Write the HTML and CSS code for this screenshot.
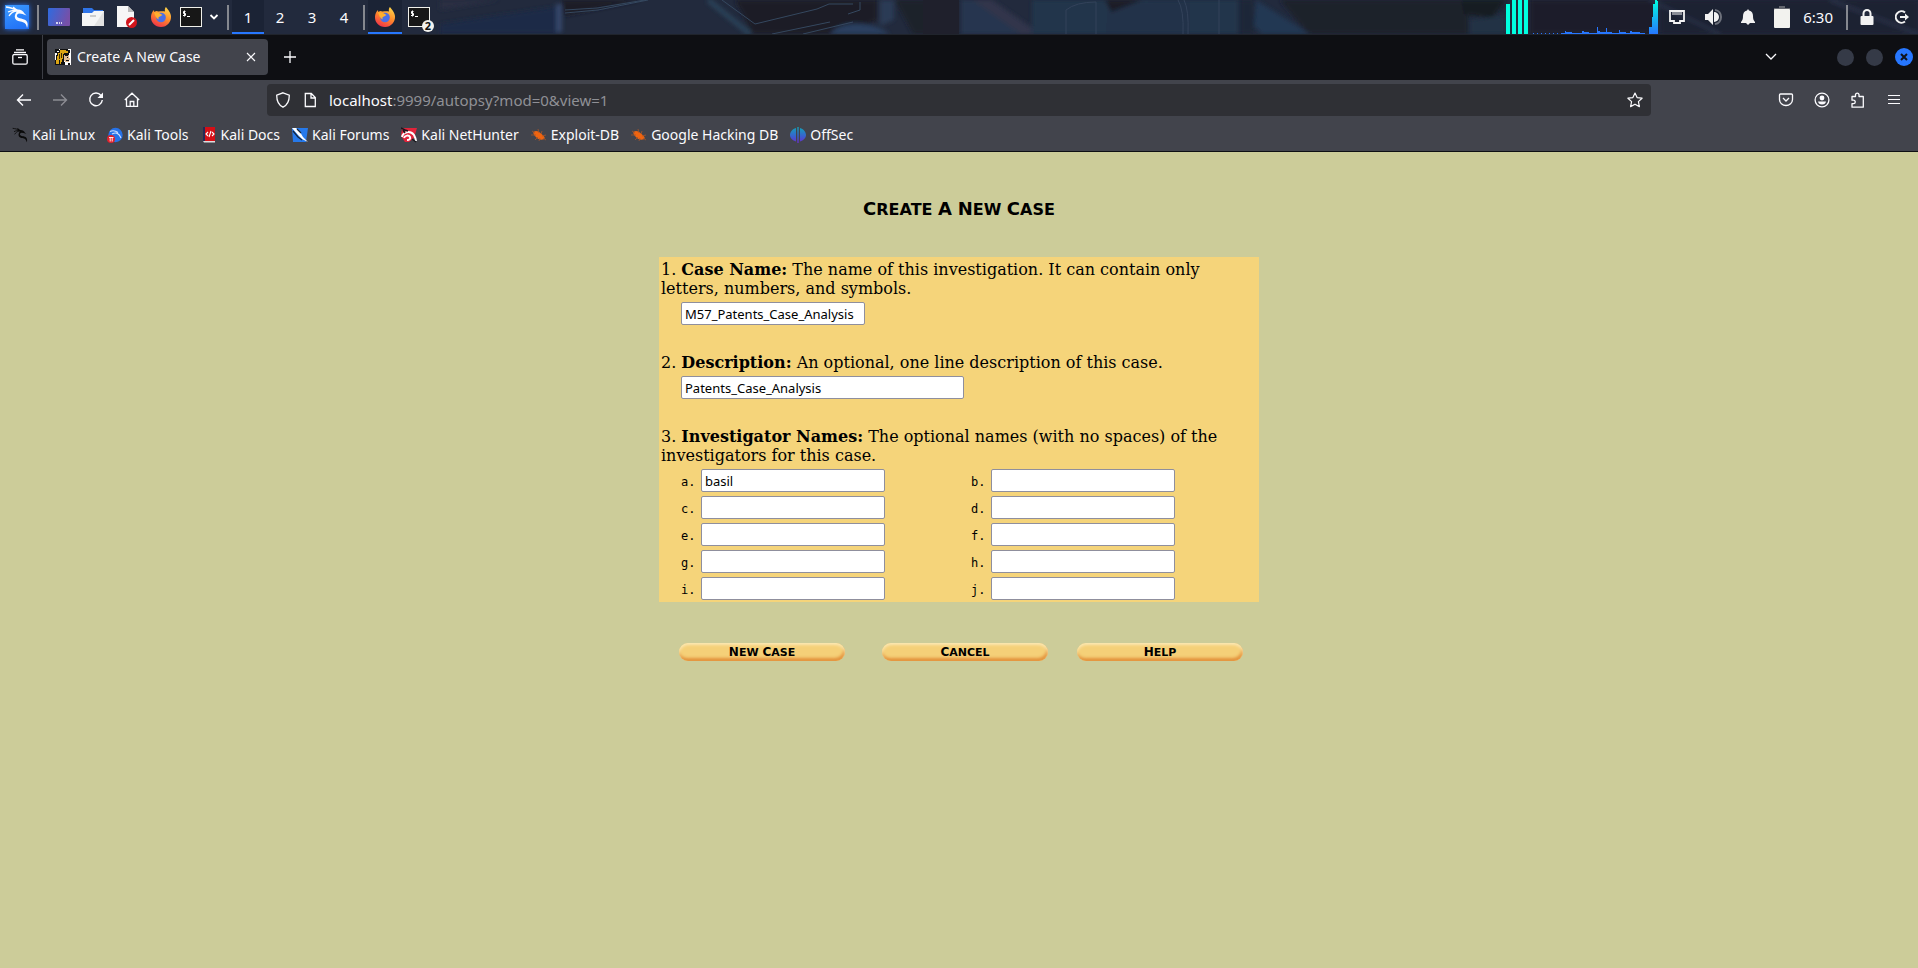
FILE: index.html
```html
<!DOCTYPE html>
<html lang="en">
<head>
<meta charset="utf-8">
<title>Create A New Case</title>
<link rel="stylesheet" href="styles.css">
</head>
<body>
<svg class="defs" aria-hidden="true">
  <defs>
    <linearGradient id="desk" x1="0" y1="0" x2="1" y2="0.3"><stop offset="0" stop-color="#2e6be0"/><stop offset="1" stop-color="#7650a8"/></linearGradient>
    <linearGradient id="fire" x1="0.8" y1="0" x2="0.3" y2="1"><stop offset="0" stop-color="#ffd84a"/><stop offset="0.5" stop-color="#ff8a2b"/><stop offset="1" stop-color="#f0324a"/></linearGradient>
    <linearGradient id="off" x1="0" y1="0" x2="0" y2="1"><stop offset="0" stop-color="#12a3b8"/><stop offset="0.6" stop-color="#3a5fd0"/><stop offset="1" stop-color="#6a2cc8"/></linearGradient>
    <linearGradient id="cpu" x1="0" y1="0" x2="0" y2="1"><stop offset="0" stop-color="#00ffe0"/><stop offset="1" stop-color="#2777ff"/></linearGradient>
    <filter id="soft"><feGaussianBlur stdDeviation="2"/></filter>
    <symbol id="dragon" viewBox="0 0 24 24">
      <path d="M1 2c4 .5 7 1 9.500 3M3 7c3-1.500 5-2 8-1.500M4 11c1.500-2.500 4-4.500 7-5" fill="none" stroke="currentColor" stroke-width="1.300"/>
      <path d="M8 1.500c2 1 3 2.500 5 3 3 0 5 1.500 6.500 4l2 2-4-1.500-3-.5c-2 0-3 1.500-2.500 3 1 2.500 7 1.500 9.500 4.500 1.500 2 1.500 4.500.5 7-.5-3-1.500-5-4-5.800-3-1-7-.8-8-4.200-.7-2.500.5-4.500 1.500-6L8 3z" fill="currentColor"/>
    </symbol>
    <symbol id="firefox" viewBox="0 0 22 22">
      <path d="M16 1c1 1.500 4.500 5 5 9 .5 6-4 11-10 11S.8 16.500 1 11c0-3 1-5 3-7 0 1 .2 1.500.5 2C6 4.500 7 5 8.500 5.500 11 5 13.500 5 15 5.500 14.500 3.500 15 2 16 1z" fill="url(#fire)"/>
      <circle cx="11" cy="11.500" r="4.800" fill="#4a6fe8"/>
      <path d="M4 6c2 1 4 0 6 1.500L12.500 9 10 10.500c-2 .3-2 1.800-1 3-3-1-4-4-5-7.500z" fill="#ffb02e"/>
    </symbol>
    <symbol id="term" viewBox="0 0 22 20">
      <rect x="0.500" y="0.500" width="21" height="19" fill="#171717" stroke="#f0f0ea"/>
      <path d="M5.500 4.500h-2V6.500h2V8.500h-2.500M4.500 3.500v6M7 9.500h3" fill="none" stroke="#fff"/>
    </symbol>
    <symbol id="bug" viewBox="0 0 16 16">
      <path d="M2.500 5c2-2 5-1 7 1s5 4 4 5.500c-1 1.500-4 1.500-6 .5S1.500 7 2.500 5z" fill="#f0640f"/>
      <path d="M1 4l3 2M0 8l5 0M4 13l3-3M8 14l1-3M7 2l1 4M11 4l-1 3M15 8l-4 1M15 13l-3-2" stroke="#a5562c" stroke-width=".8"/>
    </symbol>
  </defs>
</svg>

<header class="panel">
  <svg class="wallpaper" viewBox="0 0 1918 34" preserveAspectRatio="none" aria-hidden="true">
    <rect width="1918" height="34" fill="#222a3d"/>
    <g filter="url(#soft)">
      <path d="M440 24L560 6v28H440z" fill="#1d2a47"/>
      <path d="M440 10L500 0h-60z" fill="#2a2f43"/>
      <path d="M561 0h80l-78 16z" fill="#1b1d27"/>
      <path d="M556 4h6v28h-6z" fill="#34476a"/>
      <path d="M735 0h142v20l-30 14h-94z" fill="#1b1c25"/>
      <path d="M708 0l42 34" stroke="#2a4258" stroke-width="5"/>
      <path d="M830 34c10-14 40-14 60 0z" fill="#2a4060"/>
      <path d="M880 0h14v20l-14 6z" fill="#2c3a54"/>
      <path d="M895 0h63v34h-45z" fill="#1f202c"/>
      <path d="M961 0h20l52 34h-72z" fill="#253550"/>
      <path d="M972 0h20l40 28v6h-12z" fill="#30364b"/>
      <path d="M1032 0h206v34h-206z" fill="#22344b"/>
      <path d="M1108 12l60-12h22v34h-84z" fill="#203248"/>
      <path d="M1105 0h38l-32 12z" fill="#1c1d27"/>
      <path d="M1240 0h14v34h-14z" fill="#1f2638"/>
      <path d="M1280 0h190l-2 20v14h-160z" fill="#1f202c"/>
      <path d="M1256 0l54 34h-48l-8-8z" fill="#203752"/>
      <path d="M1461 0h45l-14 18-28-4z" fill="#191b24"/>
      <path d="M1470 20l36-5v19h-36z" fill="#203345"/>
      <path d="M1530 0h125v34h-125z" fill="#1e1f2b"/>
      <path d="M1660 0h258v34h-258z" fill="#1e2331"/>
      <path d="M1650 0l70 34M1830 0l88 34" stroke="#2a3348" stroke-width="3"/>
    </g>
    <path d="M923 0h36v34h-36z" fill="#1f202c"/>
    <path d="M565 10l32-2 48-8M565 13l33-3 50-10M722 0l33 24 62-15 12-5h24M772 34l58-12M803 34l50-12M860 2v8l-12 4" fill="none" stroke="#35485f"/>
    <path d="M1066 34V10q10-8 30-8v32M1178 0q6 10 5 34M1184 0q5 10 4 34M1219 0v34" fill="none" stroke="#33425a"/>
  </svg>
  <nav class="launchers" aria-label="Panel">
    <button class="pbtn menu" aria-label="Applications"><svg width="24" height="24"><use href="#dragon"/></svg></button>
    <span class="psep"></span>
    <button class="pbtn" aria-label="Show desktop"><svg width="22" height="18" viewBox="0 0 22 18"><rect width="22" height="18" rx="1" fill="url(#desk)"/><path d="M8 15h2M11 15h1M13 15h1" stroke="#fff" stroke-width="1.500"/></svg></button>
    <button class="pbtn" aria-label="Files"><svg width="22" height="22" viewBox="0 0 22 22"><path d="M1 2h9l2 2h9v5H1z" fill="#2f74e8"/><path d="M0 7h10l2-2h10v15H0z" fill="#f5f5f5"/><path d="M22 5v15H12z" fill="#e2e2e2"/><path d="M8 10h6" stroke="#ccc" stroke-width="2"/></svg></button>
    <button class="pbtn" aria-label="Text editor"><svg width="22" height="22" viewBox="0 0 22 22"><path d="M1 0h11l6 6v15H1z" fill="#f7f7f7"/><path d="M12 0l6 6h-6z" fill="#bbb"/><circle cx="15.500" cy="16.500" r="5.500" fill="#d2151c"/><path d="M13 19l5-5" stroke="#fff" stroke-width="2"/></svg></button>
    <button class="pbtn" aria-label="Firefox"><svg width="22" height="22"><use href="#firefox"/></svg></button>
    <button class="pbtn term" aria-label="Terminal"><svg width="22" height="20"><use href="#term"/></svg></button>
    <button class="pbtn small" aria-label="More terminals"><svg width="10" height="10" viewBox="0 0 10 10"><path d="M1.500 3L5 6.500 8.500 3" fill="none" stroke="#fff" stroke-width="1.800"/></svg></button>
    <span class="psep"></span>
    <button class="ws current">1</button><button class="ws">2</button><button class="ws">3</button><button class="ws">4</button>
    <span class="psep"></span>
    <button class="task current" aria-label="Firefox window"><svg width="22" height="22"><use href="#firefox"/></svg></button>
    <button class="task" aria-label="Terminal windows"><svg width="22" height="20"><use href="#term"/></svg><span class="badge">2</span></button>
  </nav>
  <div class="tray">
    <svg class="graph" width="152" height="34" viewBox="0 0 152 34">
      <path d="M0 4h4v30H0zM6 0h4v34H6zM12 0h4v34h-4zM18 0h4v34h-4z" fill="#00ffe0"/>
      <path d="M27 33.500h32" stroke="#2777ff" stroke-dasharray="1 3"/>
      <path d="M55 34v-1h4v-2h1v1h6v1h10v-2h2v1h5v1h8v-6h1v4h2v1h6v-4h1v4h5v1h7v-3h1v2h6v1h4v-2h2v1h8v1h5v1zM143 34v-7h2v7z" fill="#2777ff"/>
      <path d="M143 34v-7h3V17h1V4h2V0h2v1h1v33z" fill="url(#cpu)"/>
    </svg>
    <svg width="16" height="14" viewBox="0 0 16 14"><path d="M1 1h14v10h-4v2H5v-2H1z" fill="none" stroke="#f2f2f2" stroke-width="1.800"/><path d="M4 2v3M6 2v3M8 2v3M10 2v3M12 2v3" stroke="#f2f2f2"/></svg>
    <svg width="18" height="18" viewBox="0 0 18 18"><path d="M1 6h3l5-5v16l-5-5H1z" fill="#f2f2f2"/><path d="M10 4a5 5 0 0 1 0 10z" fill="#f2f2f2"/><path d="M11 2c8 1 8 13 0 14" fill="none" stroke="#6d717b" stroke-width="2"/></svg>
    <svg width="14" height="16" viewBox="0 0 14 16"><path d="M7 0l1 1.500c3 .5 4 3 4 5.500 0 3 .5 4 2 6v1H0v-1c1.500-2 2-3 2-6 0-2.500 1-5 4-5.500zM5 14h4l-2 2z" fill="#f2f2f2"/></svg>
    <svg width="16" height="22" viewBox="0 0 16 22"><path d="M5 0h6v2h5v3H0V2h5z" fill="#63666e"/><rect y="3" width="16" height="19" rx="1" fill="#f2f2ee"/></svg>
    <time class="clock">6:30</time>
    <span class="psep"></span>
    <svg class="lock" width="14" height="16" viewBox="0 0 14 16"><rect x="0.500" y="7" width="13" height="9" rx="1" fill="#f2f2f2"/><path d="M3.500 8V4.500a3.500 3.500 0 0 1 7 0V8" fill="none" stroke="#f2f2f2" stroke-width="2"/></svg>
    <svg width="14" height="14" viewBox="0 0 14 14"><path d="M10 2.500A5.700 5.700 0 1 0 10 11.500" fill="none" stroke="#f2f2f2" stroke-width="2"/><path d="M5 6h5V3.500L14 7l-4 3.500V8H5z" fill="#f2f2f2"/></svg>
  </div>
</header>

<div class="tabstrip">
  <button class="history" aria-label="Recent browsing"><svg width="16" height="16" viewBox="0 0 16 16" fill="none" stroke="#fbfbfe" stroke-width="1.300"><path d="M4 .8h8M2 3.400h12"/><rect x="0.800" y="5.500" width="14.400" height="9.700" rx="1.500"/><path d="M6 8.500h4"/></svg></button>
  <div class="tab">
    <svg width="16" height="16" viewBox="0 0 16 16" shape-rendering="crispEdges"><path d="M0 0h16v16H0z" fill="#fff"/><path d="M0 0h4v2H2v2H0zM5 0h8v1h2v3h-1v2H9v10H0v-5h1V6h1V3h2V1h1z" fill="#111"/><path d="M5 1h6v1h2v2H9v1H8v5H7v3H6v2H5v-4H4v4H1v-4h1V7h1V4h2z" fill="#dba514"/><path d="M4 5h1v5H4zM6 4h1v5H6z" fill="#3b2b06"/><path d="M9 6h5v3h1v2h-1v2h-4v-1H9z" fill="#e0bd94"/><path d="M10 6h3v1h-3zM12 8h1v1h-1zM11 11h3v1h-3zM8 13h2v3H8zM13 14h2v2h-2z" fill="#111"/></svg>
    <span class="tab-title">Create A New Case</span>
    <button aria-label="Close tab"><svg width="10" height="10" viewBox="0 0 10 10"><path d="M1 1l8 8M9 1L1 9" stroke="#fbfbfe" stroke-width="1.100"/></svg></button>
  </div>
  <button class="newtab" aria-label="New tab"><svg width="12" height="12" viewBox="0 0 12 12"><path d="M6 0v12M0 6h12" stroke="#fbfbfe" stroke-width="1.300"/></svg></button>
  <button class="listtabs" aria-label="List all tabs"><svg width="12" height="8" viewBox="0 0 12 8"><path d="M1 1l5 5 5-5" fill="none" stroke="#fbfbfe" stroke-width="1.300"/></svg></button>
  <div class="winbtns">
    <button class="dot" aria-label="Minimize"></button><button class="dot" aria-label="Maximize"></button>
    <button class="dot close" aria-label="Close"><svg width="8" height="8" viewBox="0 0 8 8"><path d="M1 1l6 6M7 1L1 7" stroke="#10131c" stroke-width="2"/></svg></button>
  </div>
</div>

<div class="toolbar">
  <div class="navbtns">
    <button aria-label="Back"><svg width="16" height="16" viewBox="0 0 16 16" fill="none" stroke="#fbfbfe" stroke-width="1.400"><path d="M15 8H1.500M7 2.500L1.500 8 7 13.500"/></svg></button>
    <button aria-label="Forward" disabled><svg width="16" height="16" viewBox="0 0 16 16" fill="none" stroke="#8c8d93" stroke-width="1.400"><path d="M1 8h13.500M9 2.500L14.500 8 9 13.500"/></svg></button>
    <button aria-label="Reload"><svg width="16" height="16" viewBox="0 0 16 16"><path d="M13 3.500A6.300 6.300 0 1 0 14.300 8" fill="none" stroke="#fbfbfe" stroke-width="1.400"/><path d="M15 .5V6H9.500z" fill="#fbfbfe"/></svg></button>
    <button aria-label="Home"><svg width="16" height="16" viewBox="0 0 16 16" fill="none" stroke="#fbfbfe" stroke-width="1.300"><path d="M.8 8L8 1.200 15.200 8M2.500 7v7.300h11V7M6.200 14V9.500h3.600V14"/></svg></button>
  </div>
  <div class="urlbar">
    <svg width="16" height="16" viewBox="0 0 16 16" fill="none" stroke="#fbfbfe" stroke-width="1.300"><path d="M8 .8l6.300 2.400c0 6-1.800 9.800-6.300 12-4.500-2.200-6.300-6-6.300-12z"/></svg>
    <svg width="14" height="16" viewBox="0 0 14 16" fill="none" stroke="#fbfbfe" stroke-width="1.300"><path d="M2.300 1.500h6L12.300 5.500v9h-10zM8 1.500V6h4.300"/></svg>
    <span class="url"><b>localhost</b>:9999/autopsy?mod=0&amp;view=1</span>
    <button aria-label="Bookmark this page"><svg width="16" height="16" viewBox="0 0 16 16"><path d="M8 1l2.100 4.600 5 .6-3.700 3.400 1 5L8 12.200l-4.400 2.400 1-5L.9 6.200l5-.6z" fill="none" stroke="#fbfbfe" stroke-width="1.200" stroke-linejoin="round"/></svg></button>
  </div>
  <div class="actions">
    <button aria-label="Pocket"><svg width="16" height="16" viewBox="0 0 16 16" fill="none" stroke="#fbfbfe" stroke-width="1.300"><path d="M2.500 2h11q1 0 1 1v4.500a6.500 6 0 0 1-13 0V3q0-1 1-1z"/><path d="M5 6l3 3 3-3"/></svg></button>
    <button aria-label="Account"><svg width="16" height="16" viewBox="0 0 16 16"><circle cx="8" cy="8" r="6.900" fill="none" stroke="#fbfbfe" stroke-width="1.300"/><circle cx="8" cy="6" r="2.400" fill="#fbfbfe"/><path d="M4 9.500h8q-.5 3-4 3t-4-3z" fill="#fbfbfe"/></svg></button>
    <button aria-label="Extensions"><svg width="16" height="16" viewBox="0 0 16 16"><path d="M2 4.500h3.500V2.500a1.800 1.800 0 0 1 3.500 0v2h4.300v10.700H2v-3.500h1.500a1.700 1.700 0 0 0 0-3.500H2z" fill="none" stroke="#fbfbfe" stroke-width="1.300" stroke-linejoin="round"/></svg></button>
    <button aria-label="Menu"><svg width="16" height="16" viewBox="0 0 16 16"><path d="M2 3.500h12M2 7.500h12M2 11.500h12" stroke="#fbfbfe" stroke-width="1.200"/></svg></button>
  </div>
</div>

<nav class="bookmarks" aria-label="Bookmarks">
  <a href="#"><svg class="dark" width="16" height="16"><use href="#dragon"/></svg>Kali Linux</a>
  <a href="#"><svg width="16" height="16" viewBox="0 0 16 16"><circle cx="8.500" cy="8" r="7.200" fill="#2672e8"/><path d="M3 4.500c4-2 6-.5 8 1M5 7c4-2 7-1 9 4" fill="none" stroke="#cfe0ff" stroke-width="1.100"/><circle cx="4" cy="12" r="4" fill="#e0202b"/><path d="M2 10.500h4.500M3.200 10.500v4M5.200 10.500v4" stroke="#fff" stroke-width=".9"/></svg>Kali Tools</a>
  <a href="#"><svg width="16" height="16" viewBox="0 0 16 16"><path d="M2 0h12v14H2z" fill="#d50f16"/><path d="M2 0h2v14H2z" fill="#252b56"/><path d="M2 14h12v1.500H3z" fill="#dedede"/><path d="M7 5L5 7l2 2M11 5l2 2-2 2M10 4L8 10" fill="none" stroke="#fff" stroke-width="1.100"/></svg>Kali Docs</a>
  <a href="#"><svg width="16" height="16" viewBox="0 0 16 16"><path d="M0 1h16l-2 14H1z" fill="#2679ea"/><path d="M0 1l4 0 4 4 3 5 5 5-6-3-4-4z" fill="#fff"/><path d="M1 4l5 6 4 3M5 2l4 4" fill="none" stroke="#15263c" stroke-width="1.200"/></svg>Kali Forums</a>
  <a href="#"><svg width="16" height="16" viewBox="0 0 16 16"><path d="M1 1h15l-3 10-5 4H4L0 9z" fill="#e0243a"/><path d="M1 10C2 5 9 3 13 8c1 2 2 4 2 6M3 11c1-3 5-3 6-1s-1 3-3 3" fill="none" stroke="#fff" stroke-width="2"/><path d="M0 1l4 2 3 1M2 3l2 3M11 12l4 3" fill="none" stroke="#18181d" stroke-width="1.500"/></svg>Kali NetHunter</a>
  <a href="#"><svg width="16" height="16"><use href="#bug"/></svg>Exploit-DB</a>
  <a href="#"><svg width="16" height="16"><use href="#bug"/></svg>Google Hacking DB</a>
  <a href="#"><svg width="16" height="16" viewBox="0 0 16 16"><path d="M6 1v13.500C2.500 13.500 0 11 0 8s2.500-6 6-7zM10 1c3.500 1 6 4 6 7s-2.500 5.500-6 6.500zM7.300 0h1.400v16H7.300z" fill="url(#off)"/></svg>OffSec</a>
</nav>

<main class="page">
  <h1><span class="word">Create</span> <span class="word">A</span> <span class="word">New</span> <span class="word">Case</span></h1>
  <form>
    <div class="case">
      <section>
        <p>1. <label for="case"><b>Case Name:</b></label> The name of this investigation. It can contain only letters, numbers, and symbols.</p>
        <input class="field" id="case" type="text" value="M57_Patents_Case_Analysis">
      </section>
      <section>
        <p>2. <label for="desc"><b>Description:</b></label> An optional, one line description of this case.</p>
        <input class="field wide" id="desc" type="text" value="Patents_Case_Analysis">
      </section>
      <section>
        <p>3. <b>Investigator Names:</b> The optional names (with no spaces) of the investigators for this case.</p>
        <div class="names">
          <div class="name"><label for="na">a.</label><input id="na" type="text" value="basil"></div>
          <div class="name"><label for="nb">b.</label><input id="nb" type="text"></div>
          <div class="name"><label for="nc">c.</label><input id="nc" type="text"></div>
          <div class="name"><label for="nd">d.</label><input id="nd" type="text"></div>
          <div class="name"><label for="ne">e.</label><input id="ne" type="text"></div>
          <div class="name"><label for="nf">f.</label><input id="nf" type="text"></div>
          <div class="name"><label for="ng">g.</label><input id="ng" type="text"></div>
          <div class="name"><label for="nh">h.</label><input id="nh" type="text"></div>
          <div class="name"><label for="ni">i.</label><input id="ni" type="text"></div>
          <div class="name"><label for="nj">j.</label><input id="nj" type="text"></div>
        </div>
      </section>
    </div>
    <div class="buttons">
      <button class="pill" type="submit"><span class="word">New</span> <span class="word">Case</span></button>
      <button class="pill" type="button"><span class="word">Cancel</span></button>
      <button class="pill" type="button"><span class="word">Help</span></button>
    </div>
  </form>
</main>
</body>
</html>
```

FILE: styles.css
```css
* { box-sizing: border-box; }
body {
  margin: 0;
  background: #cccc99;
  font: 14px/20px "Noto Sans", sans-serif;
  color: #fbfbfe;
}
button {
  margin: 0;
  padding: 0;
  border: 0;
  background: none;
  color: inherit;
  font: inherit;
}
svg { display: block; flex: none; }
.defs { position: absolute; width: 0; height: 0; }

/* desktop panel */
.panel {
  position: relative;
  height: 35px;
  display: flex;
  justify-content: space-between;
  border-bottom: 1px solid #20242c;
  overflow: hidden;
  font-size: 15px;
}
.wallpaper { position: absolute; left: 0; top: 0; width: 100%; height: 100%; }
.launchers, .tray { position: relative; display: flex; align-items: center; height: 34px; }
.launchers { padding-left: 5px; }
.pbtn { width: 34px; height: 34px; display: grid; place-items: center; }
.pbtn.menu {
  width: 24px;
  height: 24px;
  margin-right: 5px;
  background: linear-gradient(160deg, #3b9bff, #1f6df5);
  box-shadow: 0 0 5px #2777ff;
}
.pbtn.term { width: 26px; }
.pbtn.small { width: 20px; }
.psep { width: 2px; height: 25px; margin: 0 3px; background: #85888f; }
.ws { width: 32px; height: 34px; }
.task { position: relative; width: 34px; height: 34px; display: grid; place-items: center; }
.current { background: #1b2335; box-shadow: inset 0 -2px #2777ff; }
.badge {
  position: absolute;
  right: 2px;
  bottom: 2px;
  width: 12px;
  height: 12px;
  border-radius: 50%;
  background: #f2f2ee;
  color: #111;
  font: bold 11px/12px "Noto Sans", sans-serif;
}
.tray { gap: 19px; padding-right: 9px; }
.tray .psep { margin: 0 -7px 0 0; }
.graph { margin-right: -8px; }
.clock { margin: 0 -6px; }
.lock { margin-right: 2px; }

/* tabs */
.tabstrip {
  height: 45px;
  display: flex;
  align-items: center;
  background: #0e0f13;
  padding: 0 5px 1px 0;
}
.history {
  width: 43px;
  height: 44px;
  padding-left: 12px;
  border-right: 1px solid #3c3e45;
}
.tab {
  width: 221px;
  height: 36px;
  margin-left: 4px;
  padding: 0 12px 0 8px;
  display: flex;
  align-items: center;
  gap: 6px;
  border-radius: 4px;
  background: #42444c;
}
.tab-title { flex: 1; }
.newtab { margin-left: 16px; }
.listtabs { margin-left: auto; margin-right: 60px; }
.winbtns { display: flex; align-items: center; gap: 12px; }
.dot { width: 17px; height: 17px; border-radius: 50%; background: #353a47; }
.dot.close { width: 18px; height: 18px; background: #2777ff; display: grid; place-items: center; }

/* navigation */
.toolbar {
  height: 40px;
  display: flex;
  align-items: center;
  background: #42444c;
}
.navbtns { flex: none; display: flex; gap: 20px; width: 267px; padding-left: 16px; }
.urlbar {
  flex: 1;
  height: 32px;
  padding: 0 8px;
  display: flex;
  align-items: center;
  gap: 12px;
  border-radius: 4px;
  background: #2f3035;
  font-size: 15px;
}
.url { flex: 1; color: #8f9096; }
.url b { font-weight: normal; color: #fbfbfe; }
.actions { flex: none; display: flex; justify-content: flex-end; gap: 20px; width: 267px; padding-right: 16px; }
.bookmarks {
  height: 32px;
  display: flex;
  align-items: center;
  gap: 12px;
  padding: 0 12px 1px;
  background: #42444c;
  border-bottom: 1px solid #0e0f13;
}
.bookmarks a { display: flex; align-items: center; gap: 4px; color: inherit; text-decoration: none; white-space: nowrap; }
.dark { color: #0a0a0a; }

/* case form */
.page {
  max-width: 600px;
  margin: 0 auto;
  padding-top: 46px;
  color: #000;
  font: 16px/19px "DejaVu Serif", serif;
}
h1 {
  margin: 0 0 36px;
  text-align: center;
  font: bold 16px/22px "DejaVu Sans", sans-serif;
}
.word { display: inline-block; text-transform: uppercase; }
.word::first-letter { font-size: 18px; }
.case {
  display: grid;
  gap: 28px;
  padding: 3px 2px 2px;
  background: #f5d47a;
}
p { margin: 0 0 4px; }
input {
  width: 184px;
  height: 23px;
  padding: 1px 3px;
  border: 1px solid #8f8f9d;
  border-radius: 2px;
  background: #fff;
  color: #000;
  font: 13px/18px "Noto Sans", sans-serif;
}
.field { display: block; margin-left: 20px; }
.wide { width: 283px; }
.names {
  display: grid;
  grid-template-columns: 1fr 1fr;
  gap: 4px;
  padding-left: 20px;
}
.name { display: flex; align-items: center; }
.name label { width: 20px; font: 12px/20px "DejaVu Sans Mono", monospace; padding-top: 2px; }
.buttons {
  display: grid;
  grid-template-columns: 203px 195px 166px;
  padding: 41px 0 0 20px;
}
.pill {
  width: 166px;
  height: 18px;
  border-radius: 9px;
  background: #f5d078;
  box-shadow: inset 0 2px 3px #fbe8b4, inset -1px -3px 3px #e3923c;
  font: bold 11px/16px "DejaVu Sans", sans-serif;
}
.pill .word::first-letter { font-size: 12px; }
```
